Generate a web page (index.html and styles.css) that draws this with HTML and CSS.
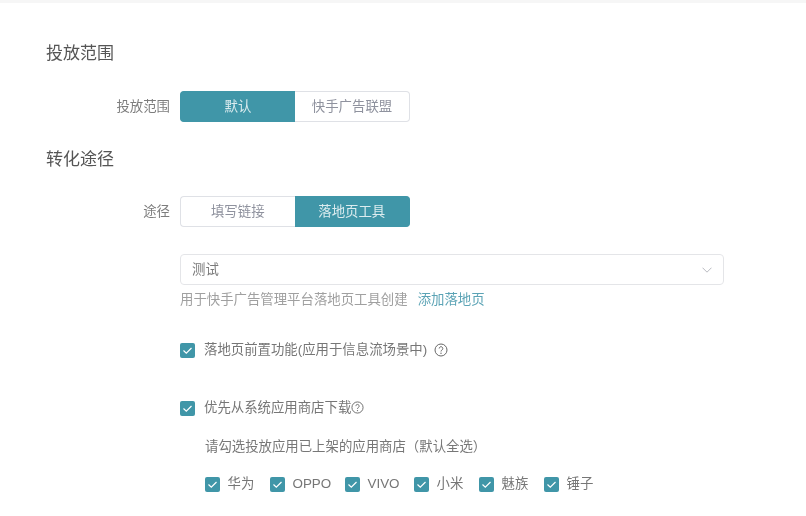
FILE: index.html
```html
<!DOCTYPE html>
<html lang="zh">
<head>
<meta charset="utf-8">
<title>投放范围</title>
<link rel="stylesheet" href="styles.css">
</head>
<body>
<div class="topbar"></div>
<main class="page">
  <h2 class="heading heading-first">投放范围</h2>
  <div class="row row-scope">
    <span class="label">投放范围</span>
    <div class="segments">
      <span class="seg seg-on seg-a">默认</span>
      <span class="seg seg-b">快手广告联盟</span>
    </div>
  </div>
  <h2 class="heading heading-second">转化途径</h2>
  <div class="row row-path">
    <span class="label">途径</span>
    <div class="segments">
      <span class="seg seg-a">填写链接</span>
      <span class="seg seg-on seg-b">落地页工具</span>
    </div>
  </div>
  <div class="body">
    <div class="select">
      <span>测试</span>
      <svg class="chevron" viewBox="0 0 10 6" width="10" height="6"><path d="M.5.7 5 5.2 9.500.7" fill="none" stroke="#b8bac0" stroke-width="1"/></svg>
    </div>
    <p class="hint">用于快手广告管理平台落地页工具创建<a class="link">添加落地页</a></p>
    <div class="check-line line-front">
      <span class="box"><svg viewBox="0 0 15 15"><path d="M3.500 7.500 6.300 10.200 11.500 5" fill="none" stroke="#fff" stroke-width="1.200"/></svg></span>
      <span class="check-text">落地页前置功能(应用于信息流场景中)</span>
      <svg class="help help-wide" viewBox="0 0 14 14" width="14" height="14"><circle cx="7" cy="7" r="6" fill="none" stroke="#666" stroke-width="1"/><path d="M5.200 5.500a1.800 1.800 0 1 1 2.800 1.500c-.7.4-1 .8-1 1.500" fill="none" stroke="#666" stroke-width="1"/><circle cx="7" cy="10.300" r=".7" fill="#666"/></svg>
    </div>
    <div class="check-line line-store">
      <span class="box"><svg viewBox="0 0 15 15"><path d="M3.500 7.500 6.300 10.200 11.500 5" fill="none" stroke="#fff" stroke-width="1.200"/></svg></span>
      <span class="check-text">优先从系统应用商店下载</span>
      <svg class="help help-tight" viewBox="0 0 14 14" width="13" height="13"><circle cx="7" cy="7" r="6" fill="none" stroke="#666" stroke-width="1"/><path d="M5.200 5.500a1.800 1.800 0 1 1 2.800 1.500c-.7.4-1 .8-1 1.500" fill="none" stroke="#666" stroke-width="1"/><circle cx="7" cy="10.300" r=".7" fill="#666"/></svg>
    </div>
    <p class="store-note">请勾选投放应用已上架的应用商店（默认全选）</p>
    <div class="stores">
      <label class="store"><span class="box"><svg viewBox="0 0 15 15"><path d="M3.500 7.500 6.300 10.200 11.500 5" fill="none" stroke="#fff" stroke-width="1.200"/></svg></span>华为</label>
      <label class="store"><span class="box"><svg viewBox="0 0 15 15"><path d="M3.500 7.500 6.300 10.200 11.500 5" fill="none" stroke="#fff" stroke-width="1.200"/></svg></span>OPPO</label>
      <label class="store"><span class="box"><svg viewBox="0 0 15 15"><path d="M3.500 7.500 6.300 10.200 11.500 5" fill="none" stroke="#fff" stroke-width="1.200"/></svg></span>VIVO</label>
      <label class="store"><span class="box"><svg viewBox="0 0 15 15"><path d="M3.500 7.500 6.300 10.200 11.500 5" fill="none" stroke="#fff" stroke-width="1.200"/></svg></span>小米</label>
      <label class="store"><span class="box"><svg viewBox="0 0 15 15"><path d="M3.500 7.500 6.300 10.200 11.500 5" fill="none" stroke="#fff" stroke-width="1.200"/></svg></span>魅族</label>
      <label class="store"><span class="box"><svg viewBox="0 0 15 15"><path d="M3.500 7.500 6.300 10.200 11.500 5" fill="none" stroke="#fff" stroke-width="1.200"/></svg></span>锤子</label>
    </div>
  </div>
</main>
</body>
</html>
```
FILE: styles.css
```css
* { box-sizing: border-box; }
html, body { margin: 0; height: 516px; overflow: hidden; background: #fff; }
body {
  font-family: "Liberation Sans", "Noto Sans CJK SC", sans-serif;
  font-size: 13.4px;
  line-height: 20px;
  color: #777;
}
.topbar { height: 3px; background: #f6f6f6; }
.page { filter: blur(0.4px); }
.heading {
  margin: 0 0 0 46px;
  font-size: 17px;
  line-height: 24px;
  font-weight: 400;
  color: #555;
}
.heading-first { padding-top: 39px; }
.heading-second { margin-top: 26px; }
.row { display: flex; align-items: center; }
.row-scope { margin-top: 25px; }
.row-path { margin-top: 24px; }
.label { width: 170px; padding-top: 1px; text-align: right; color: #7d7d7d; }
.segments {
  display: flex;
  width: 230px;
  height: 31px;
  margin-left: 10px;
}
.seg {
  display: flex;
  align-items: center;
  justify-content: center;
  padding-top: 1px;
  border: 1px solid #dfe1e6;
  color: #8f929e;
}
.seg-a { width: 115px; border-radius: 4px 0 0 4px; border-right: 0; }
.seg-b { width: 115px; border-radius: 0 4px 4px 0; border-left: 0; }
.row-path .seg-a { width: 114.500px; }
.row-path .seg-b { width: 115.500px; }
.seg-on { background: #4096a8; border-color: #4096a8; color: #dcecef; }
.body { margin: 27px 0 0 180px; width: 544px; }
.select {
  display: flex;
  align-items: center;
  justify-content: space-between;
  height: 31px;
  padding: 0 11px 0 11px;
  border: 1px solid #e4e5e8;
  border-radius: 4px;
  color: #7a7a7a;
}
.hint { margin: 5px 0 0; color: #a0a0a0; }
.link { margin-left: 10px; color: #5ba3b5; }
.check-line { display: flex; align-items: center; }
.line-front { margin-top: 30px; }
.line-store { margin-top: 38px; }
.box {
  display: block;
  flex: none;
  width: 15px;
  height: 15px;
  border-radius: 2px;
  background: #4096a8;
}
.box svg { display: block; width: 15px; height: 15px; }
.check-text { margin-left: 9px; color: #767676; }
.help-wide { margin-left: 7px; }
.help-tight { margin: -2px 0 0 0; }
.store-note { margin: 19px 0 0 25px; color: #777; }
.stores {
  display: grid;
  grid-template-columns: 65px 75px 69px 65px 65px auto;
  margin: 17px 0 0 25px;
}
.store { display: flex; align-items: center; color: #767676; }
.store .box { margin-right: 7.500px; }
```
